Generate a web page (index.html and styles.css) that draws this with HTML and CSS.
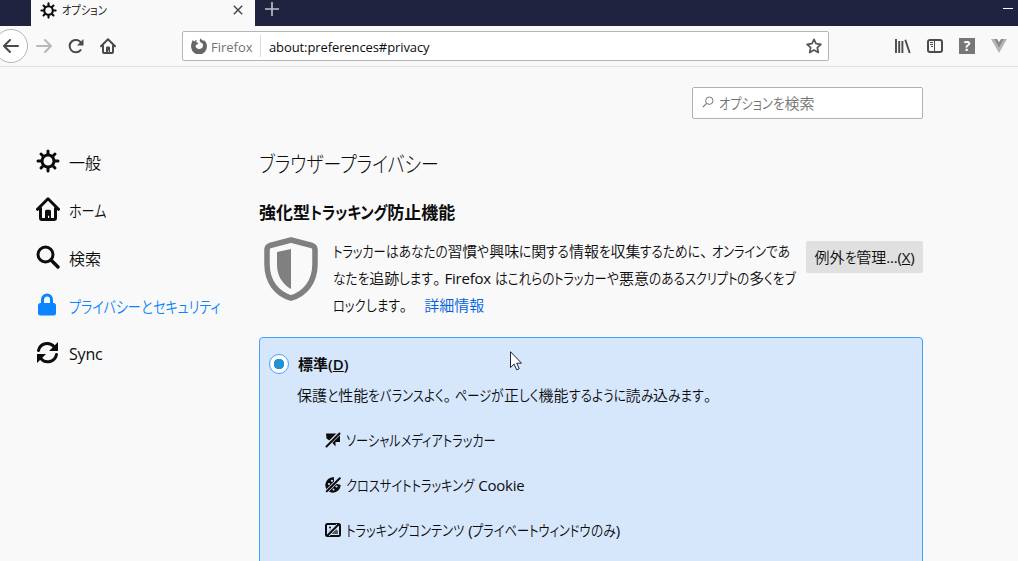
FILE: index.html
```
<!DOCTYPE html>
<html lang="ja">
<head>
    <meta charset="UTF-8">
    <meta name="viewport" content="width=device-width, initial-scale=1.0">
    <title>オプション</title>
    <link rel="stylesheet" href="styles.css">
</head>
<body>
<svg class="defs" width="0" height="0">
    <symbol id="gear" viewBox="0 0 24 24">
        <g fill="none" stroke="currentColor" stroke-width="3" stroke-linecap="round">
            <circle cx="12" cy="12" r="6"/>
            <path d="M12 5V2M12 19v3M5 12H2M19 12h3M7 7L5 5M17 7l2-2M7 17l-2 2M17 17l2 2"/>
        </g>
    </symbol>
    <symbol id="home" viewBox="0 0 16 16">
        <path d="M1 8.2L8 1.2l7 7M3 7.5V14a1 1 0 0 0 1 1h8a1 1 0 0 0 1-1V7.5" fill="none" stroke="currentColor" stroke-width="2" stroke-linecap="round" stroke-linejoin="round"/>
        <path d="M6 15V9.5a1 1 0 0 1 1-1h2a1 1 0 0 1 1 1V15H8.8v-2.5H8V15z" fill="currentColor"/>
    </symbol>
</svg>

<header class="titlebar">
    <div class="tab">
        <svg class="tab-icon"><use href="#gear"/></svg>
        <span class="tab-title jp">オプション</span>
        <svg class="tab-close" viewBox="0 0 10 10"><path d="M.8.8l8.4 8.4M9.2.8L.8 9.2" stroke="#444" stroke-width="1.4"/></svg>
    </div>
    <svg class="new-tab" viewBox="0 0 14 14"><path d="M7 0v14M0 7h14" stroke="#c3c3cc" stroke-width="1.6"/></svg>
    <div class="minimize"></div>
</header>

<nav class="toolbar">
    <div class="back">
        <svg class="ico" viewBox="0 0 16 16"><path d="M15 8H1.5M7 2L1 8l6 6" fill="none" stroke="#4a4a4f" stroke-width="2" stroke-linecap="round" stroke-linejoin="round"/></svg>
    </div>
    <svg class="ico forward" viewBox="0 0 16 16"><path d="M1 8h13.5M9 2l6 6-6 6" fill="none" stroke="#b8b8b8" stroke-width="2" stroke-linecap="round" stroke-linejoin="round"/></svg>
    <svg class="ico reload" viewBox="0 0 16 16"><path d="M12.6 12.1A6.2 6.2 0 1 1 13.2 5" fill="none" stroke="#4a4a4f" stroke-width="2" stroke-linecap="round"/><path d="M15.5 1v6.5H9z" fill="#4a4a4f"/></svg>
    <svg class="ico home"><use href="#home"/></svg>
    <div class="urlbar">
        <svg class="ico" viewBox="0 0 16 16">
            <path d="M.4 5.7L1.6 2l1.6 1.5C4.2 2.5 5 2 6 1.8L5 4.1l2.6 1L6 6.6l-1.2.6C4.2 9.2 5.8 11 8 11c2.500 0 4-1.600 4-3.600C12 5.400 10.500 4.700 9.300 4.300 8.200 3.300 8.800 1.500 9.600.2c.4 1.200 1.600 1.700 2.600 2.500l.8-.5c2 1.500 3 3.500 2.900 6A7.900 7.900 0 0 1 .2 9.800C0 8.400.1 7 .4 5.700z" fill="#666"/>
        </svg>
        <span class="identity">Firefox</span>
        <span class="url">about:preferences#privacy</span>
        <svg class="star" viewBox="0 0 16 16"><path d="M8 1.300l2 4.400 4.900.6-3.600 3.300 1 4.900L8 12.100l-4.300 2.400 1-4.900L1.100 6.300 6 5.700z" fill="none" stroke="#555" stroke-width="1.700" stroke-linejoin="round"/></svg>
    </div>
    <div class="actions">
        <svg class="ico" viewBox="0 0 16 16"><path d="M1 1v14M4.200 3v12M7.400 3v12M10.300 1.800L14.700 15" stroke="#4a4a4f" stroke-width="1.900" fill="none"/></svg>
        <svg class="ico" viewBox="0 0 16 16"><rect x="1" y="2" width="14" height="12" rx="2" fill="none" stroke="#4a4a4f" stroke-width="2"/><path d="M7.500 2v12M3 4.500h3M3 6.500h3M4 8.500h2" stroke="#4a4a4f" stroke-width="1"/></svg>
        <span class="help">?</span>
        <svg class="ico" viewBox="0 0 16 16"><path d="M0 1h16L8 15z" fill="#b5b5b5"/><path d="M3.200 1h9.600L8 9.500z" fill="#8a8a8a"/><path d="M6 1h4L8 4.300z" fill="#f9f9fa"/></svg>
    </div>
</nav>

<div class="page">
    <aside class="categories">
        <a class="category"><svg class="cat-icon"><use href="#gear"/></svg><span class="jp">一般</span></a>
        <a class="category"><svg class="cat-icon"><use href="#home"/></svg><span class="jp">ホーム</span></a>
        <a class="category">
            <svg class="cat-icon" viewBox="0 0 24 24"><circle cx="9.500" cy="9.500" r="7.500" fill="none" stroke="currentColor" stroke-width="3"/><path d="M15 15l7 7" stroke="currentColor" stroke-width="3.400" stroke-linecap="round"/></svg>
            <span class="jp">検索</span>
        </a>
        <a class="category selected">
            <svg class="cat-icon" viewBox="0 0 24 24"><rect x="2" y="10" width="18" height="12.500" rx="2.500" fill="currentColor"/><path d="M6.500 11V6.500a4.500 4.500 0 0 1 9 0V11" fill="none" stroke="currentColor" stroke-width="3"/></svg>
            <span class="jp">プライバシーとセキュリティ</span>
        </a>
        <a class="category">
            <svg class="cat-icon" viewBox="0 0 24 24"><path d="M2.500 9.500A9 9 0 0 1 18 5.500M20.500 13.500A9 9 0 0 1 5 17.800" fill="none" stroke="currentColor" stroke-width="3" stroke-linecap="round"/><path d="M22 1v9h-9zM1 22v-9h9z" fill="currentColor"/></svg>
            <span class="jp">Sync</span>
        </a>
    </aside>

    <main class="content">
        <div class="search">
            <svg class="search-icon" viewBox="0 0 12 12"><circle cx="7.300" cy="4.700" r="3.700" fill="none" stroke="#777"/><path d="M4.600 7.400L.8 11.200" stroke="#777" stroke-width="1.200"/></svg>
            <span class="jp">オプションを検索</span>
        </div>

        <h1 class="jp">ブラウザープライバシー</h1>
        <h2 class="jp">強化型トラッキング防止機能</h2>

        <section class="tracking">
            <svg class="shield" viewBox="0 0 54 64"><path d="M27 3L48 8.500Q51 9.500 51 13v14C51 45 41 57 27 61 13 57 3 45 3 27V13Q3 9.500 6 8.500z" fill="none" stroke="#808080" stroke-width="5.500" stroke-linejoin="round"/><path d="M27 12v40C18 47 13 38 13 28V15z" fill="#808080"/></svg>
            <p class="description">
                <span class="line jp">トラッカーはあなたの習慣や興味に関する情報を収集するために、オンラインであ</span>
                <span class="line jp">なたを追跡します。Firefox はこれらのトラッカーや悪意のあるスクリプトの多くをブ</span>
                <span class="line"><span class="jp">ロックします。</span><a class="learn-more">詳細情報</a></span>
            </p>
            <button class="exceptions"><span class="jp">例外を管理</span><span class="latin">...(<u>X</u>)</span></button>
        </section>

        <section class="option">
            <div class="option-head"><span class="radio"></span><span class="option-title">標準(<u>D</u>)</span></div>
            <p class="option-desc jp">保護と性能をバランスよく。ページが正しく機能するように読み込みます。</p>
            <ul class="blocked">
                <li>
                    <svg class="ico" viewBox="0 0 16 16"><path d="M1 1.500h14V10h-4.500v4.500L7.500 11 5 9 1.500 6.500z" fill="currentColor"/><path d="M0 15.500L15.500 0" stroke="#d6e7fc" stroke-width="3.800"/><path d="M1.500 14.500L14.500 1.500" stroke="currentColor" stroke-width="2" stroke-linecap="round"/></svg>
                    <span class="jp">ソーシャルメディアトラッカー</span>
                </li>
                <li>
                    <svg class="ico" viewBox="0 0 16 16"><path d="M9 .3A7.700 7.700 0 1 0 15.700 8L12 7 9 4z" fill="currentColor"/><g fill="#d6e7fc"><circle cx="4" cy="7" r="1.100"/><circle cx="7" cy="3.800" r="1.100"/><circle cx="11.500" cy="9.500" r="1.100"/><circle cx="8.500" cy="12.500" r="1"/></g><path d="M0 16L16 0" stroke="#d6e7fc" stroke-width="3.600"/><path d="M1.800 14.200L14.800 1.200" stroke="currentColor" stroke-width="2" stroke-linecap="round"/></svg>
                    <span class="jp">クロスサイトトラッキング Cookie</span>
                </li>
                <li>
                    <svg class="ico" viewBox="0 0 16 16"><rect x="1" y="2" width="14" height="12" rx="1.500" fill="none" stroke="currentColor" stroke-width="2"/><path d="M3.500 10l2.500-3 6 5H3.500zM9 9l2-2 2 2v3H9z" fill="#555b65"/><circle cx="5" cy="5.500" r="1" fill="currentColor"/><path d="M3 13L13 3" stroke="#d6e7fc" stroke-width="3.600"/><path d="M2.500 13.500l11-11" stroke="currentColor" stroke-width="2" stroke-linecap="round"/></svg>
                    <span class="jp">トラッキングコンテンツ (プライベートウィンドウのみ)</span>
                </li>
            </ul>
        </section>
    </main>
</div>

<svg class="cursor" viewBox="0 0 12 20"><path d="M.5.700v15.800l3.600-3.400 2.500 5.700 2.600-1.100-2.500-5.500h4.800z" fill="#fff" stroke="#20243c"/></svg>

<script>
    // UI fonts set kana narrower than kanji: condense each run of kana
    const ratios = { kata: 0.815, hira: 0.85 };

    document.querySelectorAll(".jp").forEach(el => {
        el.innerHTML = el.textContent
            .replace(/[A-Za-z()]+/g, run => `<span class="latin">${run}</span>`)
            .replace(/[ァ-ヿ]+/g, run => `<span class="kata">${run}</span>`)
            .replace(/[ぁ-ゖ]+/g, run => `<span class="hira">${run}</span>`)
            .replace(/[、。]/g, mark => `<span class="mark">${mark}</span>`);
    });

    for (const name in ratios) {
        document.querySelectorAll("." + name).forEach(run => {
            const ratio = run.closest("h2") ? 0.85 : ratios[name];
            const width = run.getBoundingClientRect().width;
            run.style.transform = `scaleX(${ratio})`;
            run.style.marginRight = `${-width * (1 - ratio)}px`;
        });
    }
</script>
</body>
</html>
```
FILE: styles.css
```
* { box-sizing: border-box; }
body {
    margin: 0;
    height: 561px;
    overflow: hidden;
    background: #f9f9fa;
    color: #0c0c0d;
    font-family: "Open Sans", "Noto Sans CJK JP", sans-serif;
    font-size: 15px;
    font-weight: 350;
    font-feature-settings: "palt";
    white-space: nowrap;
}
.defs { position: absolute; }
svg { flex: none; display: block; }
h1, h2, p, ul { margin: 0; padding: 0; }
.ico { width: 16px; height: 16px; }
.kata, .hira { display: inline-block; transform-origin: left; }
.latin { font-weight: 400; letter-spacing: -0.2px; }
.mark { margin-right: 4px; }

/* browser chrome */
.titlebar { display: flex; height: 26px; background: #202340; padding-left: 31px; }
.tab { display: flex; align-items: center; width: 224px; height: 26px; padding: 0 12px 6px 9px; background: #f9f9fa; font-size: 12.5px; }
.tab-icon { width: 17px; height: 17px; }
.tab-title { margin-left: 5px; padding-bottom: 1px; }
.tab-close { width: 10px; height: 10px; margin-left: auto; }
.new-tab { width: 14px; height: 14px; margin: 2px 0 0 10px; }
.minimize { width: 10px; height: 1px; margin: 8px 5px 0 auto; background: #fff; }
.toolbar { display: flex; align-items: center; height: 41px; border-bottom: 1px solid #e0e0e1; color: #4a4a4f; }
.back { display: flex; align-items: center; justify-content: flex-end; flex: none; width: 34px; height: 34px; margin-left: -6px; padding-right: 8px; border: 1px solid #b5b5b5; border-radius: 50%; background: #fff; }
.forward { margin-left: 8px; }
.reload, .home { margin-left: 16px; }
.urlbar { display: flex; align-items: center; width: 647px; height: 30px; margin-left: 66px; padding: 0 6px 0 8px; border: 1px solid #b5b5b5; border-radius: 2px; background: #fff; font-size: 13px; font-weight: 400; }
.identity { height: 22px; line-height: 24px; margin-left: 4px; width: 50px; border-right: 1px solid #dcdcdc; color: #737373; }
.url { margin-left: 8px; padding-top: 2px; color: #0c0c0d; letter-spacing: -0.1px; }
.star { width: 16px; height: 16px; margin-left: auto; }
.actions { display: flex; gap: 16px; margin-left: 66px; }
.help { width: 16px; height: 16px; background: #777; color: #fff; font-weight: bold; font-size: 14px; line-height: 16px; text-align: center; }

/* preferences */
.page { display: flex; }
.categories { width: 260px; padding: 70px 0 0 36px; }
.category { display: flex; align-items: center; height: 48px; font-size: 16px; }
.category span { position: relative; top: 0.5px; }
.cat-icon { width: 24px; height: 24px; margin-right: 9px; }
.selected { color: #0a84ff; }
.content { width: 663px; padding-top: 20px; }
.search { display: flex; align-items: center; width: 231px; height: 32px; margin-left: auto; padding: 0 0 2px 9px; border: 1px solid #b1b1b1; border-radius: 2px; background: #fff; color: #737373; }
.search-icon { width: 12px; height: 12px; margin-right: 5px; }
h1 { margin: 28px 0 0 -1px; font-size: 22px; font-weight: 300; line-height: 33px; }
h2 { margin: 20px 0 0 -1px; font-size: 17px; font-weight: 700; line-height: 26px; }
.tracking { display: flex; align-items: flex-start; margin-top: 11px; }
.shield { width: 54px; height: 64px; margin-left: 4px; }
.description { width: 472px; margin-left: 15px; padding-top: 1px; }
.line { display: block; height: 27px; line-height: 27px; }
.description > .line:nth-child(-n+2) { letter-spacing: -0.08px; }
.learn-more { margin-left: 13px; color: #0060df; }
.exceptions { width: 117px; height: 32px; margin: 4px 0 0 1px; padding: 0 0 2px; border: 0; border-radius: 2px; background: #e0e0e1; color: #0c0c0d; font: inherit; font-feature-settings: inherit; }
.option { height: 240px; margin: 18px 0 0 -1px; width: 664px; padding: 10px 9px; border: 1px solid #45a1ff; border-radius: 4px; background: #d6e7fc; }
.option-head { display: flex; align-items: center; height: 32px; font-weight: 600; }
.option-title { padding-bottom: 2px; }
.radio { width: 20px; height: 20px; margin-right: 9px; border: 1px solid #45a1ff; border-radius: 50%; background: radial-gradient(circle, #2292d0 5px, #fff 5.500px); }
.option-desc { margin-left: 28px; line-height: 30px; }
.blocked { margin: 7px 0 0 56px; list-style: none; }
.blocked li { display: flex; align-items: center; gap: 5px; height: 45px; }
.cursor { position: absolute; left: 510px; top: 351px; width: 12px; height: 20px; }
```
